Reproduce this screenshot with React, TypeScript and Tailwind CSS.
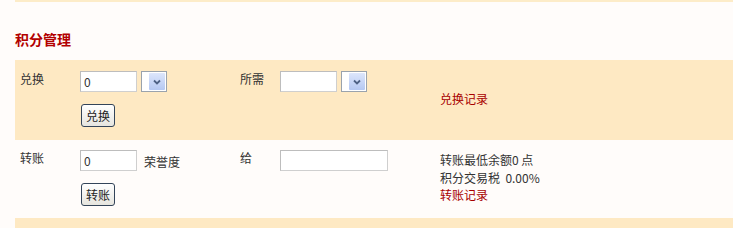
import React from 'react'

const font = { fontFamily: '"Noto Sans CJK SC", "Liberation Sans", sans-serif' }

function Select() {
  return (
    <div className="flex h-[21px] w-[26px] items-center justify-end border border-[#9aa3ad] bg-white pr-[1px]">
      <div className="flex h-[17px] w-[16px] items-center justify-center rounded-[1px] bg-gradient-to-b from-[#dde6fb] to-[#b5c8f2]">
        <svg width="8" height="6" viewBox="0 0 8 6" aria-hidden>
          <path d="M1 1.5 L4 4.5 L7 1.5" stroke="#4d6185" strokeWidth="1.8" fill="none" />
        </svg>
      </div>
    </div>
  )
}

function Input({ value = '', width }: { value?: string; width: string }) {
  return (
    <input
      type="text"
      defaultValue={value}
      className={`${width} h-[21px] border border-[#cfcfcf] border-t-[#bdbdbd] border-l-[#bdbdbd] bg-white px-[3px] text-[12px] text-[#333] outline-none`}
      style={font}
    />
  )
}

function Button({ label }: { label: string }) {
  return (
    <button
      type="button"
      className="h-[23px] w-[34px] rounded-[3px] border border-[#334459] bg-gradient-to-b from-white to-[#e6e5df] text-[12px] leading-none text-[#222]"
      style={font}
    >
      {label}
    </button>
  )
}

export default function App() {
  return (
    <div className="h-[228px] w-full overflow-hidden bg-[#fffcfa] pl-[15px] text-[12px] text-[#333]" style={font}>
      <div className="h-[2px] bg-[#fdecc8]" />
      <h2 className="pt-[27px] pl-0 text-[14px] font-bold leading-[20px] text-[#b30000]">积分管理</h2>
      <div className="mt-[11px]">
        {/* 兑换 */}
        <div className="grid h-[80px] grid-cols-[65px_160px_40px_160px_1fr] bg-[#fee9c3]">
          <div className="pt-[10px] pl-[5px] leading-[18px]">兑换</div>
          <div className="flex flex-col gap-[12px] pt-[11px]">
            <div className="flex gap-[4px]">
              <Input value="0" width="w-[57px]" />
              <Select />
            </div>
            <div className="pl-[1px]">
              <Button label="兑换" />
            </div>
          </div>
          <div className="pt-[10px] leading-[18px]">所需</div>
          <div className="flex gap-[4px] pt-[11px]">
            <Input width="w-[57px]" />
            <Select />
          </div>
          <div className="flex items-center pb-[3px] text-[#a80000]">兑换记录</div>
        </div>
        {/* 转账 */}
        <div className="grid h-[78px] grid-cols-[65px_160px_40px_160px_1fr]">
          <div className="pt-[9px] pl-[5px] leading-[18px]">转账</div>
          <div className="flex flex-col gap-[12px] pt-[10px]">
            <div className="flex items-center gap-[7px]">
              <Input value="0" width="w-[57px]" />
              <span className="pt-[2px]">荣誉度</span>
            </div>
            <div className="pl-[1px]">
              <Button label="转账" />
            </div>
          </div>
          <div className="pt-[9px] leading-[18px]">给</div>
          <div className="pt-[10px]">
            <Input width="w-[108px]" />
          </div>
          <div className="pt-[11px] leading-[18px]">
            <div>转账最低余额0 点</div>
            <div>积分交易税&nbsp;&nbsp;0.00%</div>
            <div className="leading-[16px] text-[#a80000]">转账记录</div>
          </div>
        </div>
        <div className="h-[12px] bg-[#fee9c3]" />
      </div>
    </div>
  )
}
